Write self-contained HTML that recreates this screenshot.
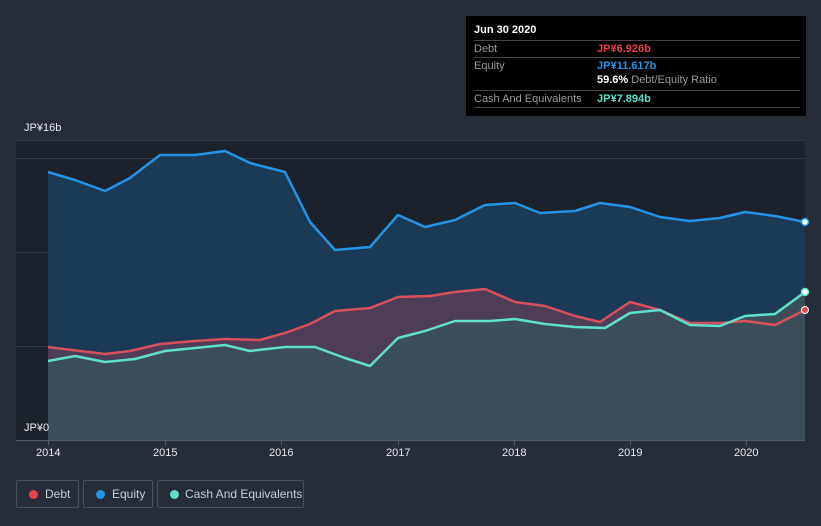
<!DOCTYPE html>
<html><head><meta charset="utf-8"><style>
body{margin:0;width:821px;height:526px;background:#262d39;font-family:"Liberation Sans",sans-serif;overflow:hidden;position:relative}
.tt{position:absolute;left:466px;top:16px;width:340px;height:100px;background:#000;color:#fff;font-size:11px}
.tt .r{position:absolute;left:8px;width:326px;border-top:1px solid #444;height:16px;line-height:16px}
.tt .l{color:#999;position:absolute;left:0}
.tt .v{position:absolute;left:123px;font-weight:bold}
.lg{position:absolute;top:480px;height:26px;border:1px solid #4a515c;border-radius:2px;color:#c8ccd2;font-size:12px;line-height:26px}
.lg i{position:absolute;left:12px;top:9px;width:9px;height:9px;border-radius:50%}
.ax{position:absolute;color:#e8eaed;font-size:11px}
</style></head><body>
<svg width="821" height="526" style="position:absolute;left:0;top:0">
<rect x="16" y="140" width="789" height="300" fill="#1c222c"/>
<g stroke="#353c48" stroke-width="1"><line x1="16" y1="140.5" x2="805" y2="140.5"/><line x1="16" y1="158.5" x2="805" y2="158.5"/><line x1="16" y1="252.5" x2="805" y2="252.5"/><line x1="16" y1="346.5" x2="805" y2="346.5"/></g>
<polygon fill="#1b3a56" points="48,440 48,172 75,180 105,191 130,178 160,155 195,155 225,151 250,163 285,172 310,222 335,250 370,247 398,215 425,227 455,220 485,205 515,203 540,213 575,211 600,203 630,207 660,217 690,221 720,218 745,212 775,216 805,222 805,440"/>
<polygon fill="rgba(200,70,90,0.3)" points="48,440 48,347 80,351 105,354 130,351 160,344 195,341 225,339 260,340 285,333 310,324 335,311 370,308 398,297 430,296 455,292 485,289 515,302 545,306 575,316 600,322 630,302 660,310 690,323 720,323 745,321 775,325 805,310 805,440"/>
<polygon fill="#3c4e5a" points="48,440 48,361 75,356 105,362 135,359 165,351 195,348 225,345 250,351 285,347 315,347 345,358 370,366 398,338 425,331 455,321 490,321 515,319 545,324 575,327 605,328 630,313 660,310 690,325 720,326 745,316 775,314 805,292 805,440"/>
<g fill="none" stroke-width="2.5" stroke-linejoin="round">
<polyline stroke="#2394e6" points="48,172 75,180 105,191 130,178 160,155 195,155 225,151 250,163 285,172 310,222 335,250 370,247 398,215 425,227 455,220 485,205 515,203 540,213 575,211 600,203 630,207 660,217 690,221 720,218 745,212 775,216 805,222"/>
<polyline stroke="#d9505c" points="48,347 80,351 105,354 130,351 160,344 195,341 225,339 260,340 285,333 310,324 335,311 370,308 398,297 430,296 455,292 485,289 515,302 545,306 575,316 600,322 630,302 660,310 690,323 720,323 745,321 775,325 805,310"/>
<polyline stroke="#5fe0cc" points="48,361 75,356 105,362 135,359 165,351 195,348 225,345 250,351 285,347 315,347 345,358 370,366 398,338 425,331 455,321 490,321 515,319 545,324 575,327 605,328 630,313 660,310 690,325 720,326 745,316 775,314 805,292"/>
</g>
<circle cx="805" cy="222" r="3.5" fill="#fff" stroke="#2394e6" stroke-width="1.5"/>
<circle cx="805" cy="310" r="3.5" fill="#e84450" stroke="#fff" stroke-width="1"/>
<circle cx="805" cy="292" r="3.5" fill="#fff" stroke="#5fe0cc" stroke-width="1.5"/>
<line x1="16" y1="440.5" x2="805" y2="440.5" stroke="#555c66"/>
<g stroke="#555c66"><line x1="48.5" y1="440" x2="48.5" y2="445"/><line x1="165.5" y1="440" x2="165.5" y2="445"/><line x1="281.5" y1="440" x2="281.5" y2="445"/><line x1="398.5" y1="440" x2="398.5" y2="445"/><line x1="514.5" y1="440" x2="514.5" y2="445"/><line x1="630.5" y1="440" x2="630.5" y2="445"/><line x1="746.5" y1="440" x2="746.5" y2="445"/></g>
</svg>
<div class="ax" style="left:24px;top:122px">JP¥16b</div>
<div class="ax" style="left:24px;top:422px">JP¥0</div>
<div class="ax" style="left:36px;top:447px">2014</div>
<div class="ax" style="left:153px;top:447px">2015</div>
<div class="ax" style="left:269px;top:447px">2016</div>
<div class="ax" style="left:386px;top:447px">2017</div>
<div class="ax" style="left:502px;top:447px">2018</div>
<div class="ax" style="left:618px;top:447px">2019</div>
<div class="ax" style="left:734px;top:447px">2020</div>
<div class="tt">
<div style="position:absolute;left:8px;top:8px;font-weight:bold">Jun 30 2020</div>
<div class="r" style="top:24px"><span class="l">Debt</span><span class="v" style="color:#e8414c">JP¥6.926b</span></div>
<div class="r" style="top:41px;border-bottom:none"><span class="l">Equity</span><span class="v" style="color:#2394e6">JP¥11.617b</span></div>
<div style="position:absolute;left:131px;top:58px;font-weight:bold">59.6% <span style="color:#999;font-weight:normal">Debt/Equity Ratio</span></div>
<div class="r" style="top:74px;border-bottom:1px solid #444"><span class="l">Cash And Equivalents</span><span class="v" style="color:#5fe0cc">JP¥7.894b</span></div>
</div>
<div class="lg" style="left:16px;width:61px"><i style="background:#e8414c"></i><span style="position:absolute;left:28px">Debt</span></div>
<div class="lg" style="left:83px;width:68px"><i style="background:#2394e6"></i><span style="position:absolute;left:28px">Equity</span></div>
<div class="lg" style="left:157px;width:145px"><i style="background:#5fe0cc"></i><span style="position:absolute;left:27px">Cash And Equivalents</span></div>
</body></html>
